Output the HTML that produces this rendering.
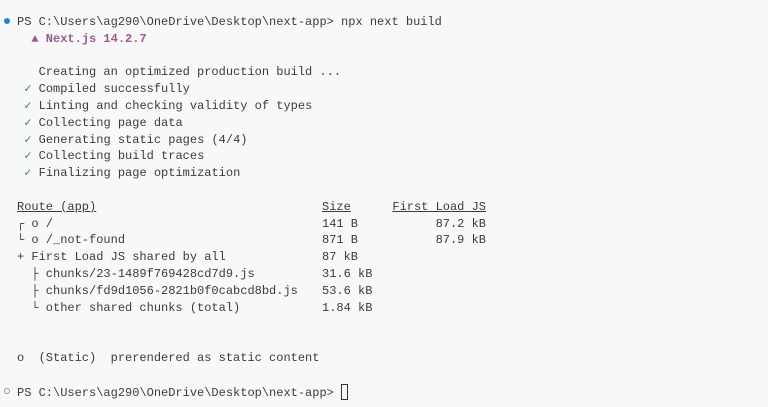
<!DOCTYPE html>
<html><head><meta charset="utf-8"><style>
html,body{margin:0;padding:0;background:#f8f8f8;width:768px;height:407px;overflow:hidden}
pre{position:absolute;left:17px;top:14px;margin:0;font-family:"Liberation Mono","DejaVu Sans Mono",monospace;font-size:12px;line-height:16.8px;color:#3b3b3b}
.n{color:#9a5a8f;font-weight:bold}
.g{color:#2e8b3a}
u{text-decoration:underline}
.dot{position:absolute;left:4px;width:6px;height:6px;border-radius:50%}
.cur{display:inline-block;width:7px;height:16px;border:1px solid #333;vertical-align:-4px;box-sizing:border-box}
.c{position:absolute;font-family:"Liberation Mono","DejaVu Sans Mono",monospace;font-size:12px;line-height:16.8px;color:#3b3b3b;white-space:pre}
.s{left:322px}.f{right:282px;text-align:right}
</style></head><body>
<div class="dot" style="top:18px;background:#1a85d6"></div>
<div class="dot" style="top:388px;border:1px solid #999;box-sizing:border-box"></div>
<pre>PS C:\Users\ag290\OneDrive\Desktop\next-app&gt; npx next build
  <span class="n">▲ Next.js 14.2.7</span>

   Creating an optimized production build ...
 <span class="g">✓</span> Compiled successfully
 <span class="g">✓</span> Linting and checking validity of types
 <span class="g">✓</span> Collecting page data
 <span class="g">✓</span> Generating static pages (4/4)
 <span class="g">✓</span> Collecting build traces
 <span class="g">✓</span> Finalizing page optimization

<u>Route (app)</u>
┌ o /
└ o /_not-found
+ First Load JS shared by all
  ├ chunks/23-1489f769428cd7d9.js
  ├ chunks/fd9d1056-2821b0f0cabcd8bd.js
  └ other shared chunks (total)


o  (Static)  prerendered as static content

PS C:\Users\ag290\OneDrive\Desktop\next-app&gt; <span class="cur"></span></pre>
<div class="c s" style="top:198.8px"><u>Size</u></div>
<div class="c f" style="top:198.8px"><u>First Load JS</u></div>
<div class="c s" style="top:215.6px">141 B</div>
<div class="c f" style="top:215.6px">87.2 kB</div>
<div class="c s" style="top:232.4px">871 B</div>
<div class="c f" style="top:232.4px">87.9 kB</div>
<div class="c s" style="top:249.2px">87 kB</div>
<div class="c s" style="top:266px">31.6 kB</div>
<div class="c s" style="top:282.8px">53.6 kB</div>
<div class="c s" style="top:299.6px">1.84 kB</div>
</body></html>
